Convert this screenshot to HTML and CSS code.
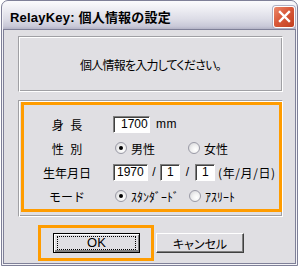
FILE: index.html
```html
<!DOCTYPE html>
<html lang="ja">
<head>
    <meta charset="UTF-8">
    <title>RelayKey</title>
    <link rel="stylesheet" href="styles.css">
</head>
<body>
    <div class="window">
        <div class="titlebar">
            <span class="title">RelayKey: 個人情報の設定</span>
            <span class="close">
                <svg width="13" height="13" viewBox="0 0 13 13">
                    <path d="M2 2 L11 11 M11 2 L2 11" stroke="#fff" stroke-width="2.4" stroke-linecap="square"/>
                </svg>
            </span>
        </div>

        <div class="client">
            <!-- 안내 메시지 -->
            <div class="panel message">個人情報を入力してください。</div>

            <!-- 입력 그룹 -->
            <div class="panel group">
                <div class="highlight form">
                    <div class="label">身&nbsp;&nbsp;長</div>
                    <div class="controls">
                        <input type="text" class="box w-height" value="1700">
                        <span class="unit">mm</span>
                    </div>

                    <div class="label">性&nbsp;&nbsp;別</div>
                    <div class="controls">
                        <label class="option w-sex"><input type="radio" name="sex" checked><span>男性</span></label>
                        <label class="option"><input type="radio" name="sex"><span>女性</span></label>
                    </div>

                    <div class="label">生年月日</div>
                    <div class="controls">
                        <input type="text" class="box w-year" value="1970">
                        <span class="slash">/</span>
                        <input type="text" class="box w-day" value="1">
                        <span class="slash wide">/</span>
                        <input type="text" class="box w-day" value="1">
                        <span class="hint">(年/月/日)</span>
                    </div>

                    <div class="label">モード</div>
                    <div class="controls">
                        <label class="option w-mode"><input type="radio" name="mode" checked><span class="half">ｽﾀﾝﾀﾞｰﾄﾞ</span></label>
                        <label class="option"><input type="radio" name="mode"><span class="half">ｱｽﾘｰﾄ</span></label>
                    </div>
                </div>
            </div>

            <div class="buttons">
                <div class="highlight ok-wrap">
                    <button class="btn default"><span class="focus">OK</span></button>
                </div>
                <button class="btn cancel">キャンセル</button>
            </div>
        </div>
    </div>
</body>
</html>
```

FILE: styles.css
```css
body {
    margin: 0;
    background: #ffffff;
    font-family: "Liberation Sans", "Noto Sans CJK JP", sans-serif;
    font-size: 12px;
    color: #000;
}

/* 창 테두리 */
.window {
    margin-left: 1px;
    width: 297px;
    height: 266px;
    box-sizing: border-box;
    border: 1px solid #7f8098;
    border-radius: 7px 7px 0 0;
    background: #f3f3f7;
    padding: 0 1px 1px 1px;
    display: flex;
    flex-direction: column;
    overflow: hidden;
}

.titlebar {
    height: 28px;
    flex: none;
    display: flex;
    align-items: center;
    justify-content: space-between;
    padding: 0 1px 0 7px;
    background: linear-gradient(#fbfbfd 0%, #ebebf1 35%, #dcdce6 65%, #c9c9d8 90%, #b4b4c6 100%);
    border-radius: 6px 6px 0 0;
}

.title {
    font-weight: bold;
    font-size: 13px;
    letter-spacing: 0.2px;
    color: #000;
    padding-top: 2px;
}

.close {
    width: 20px;
    height: 20px;
    margin-top: 3px;
    border: 1px solid #fff;
    border-radius: 3px;
    background: linear-gradient(135deg, #ec8a6c 0%, #d9593a 45%, #c13f1f 100%);
    box-shadow: 0 0 0 1px #b0b0c4;
    display: flex;
    align-items: center;
    justify-content: center;
}

/* 클라이언트 영역 */
.client {
    flex: 1;
    border: 1px solid #7f8098;
    background: #e0dfe3;
    padding: 6px 12px 0 14px;
}

/* 에칭 테두리 패널 */
.panel {
    border: 1px solid;
    border-color: #a0a0a4 #ffffff #ffffff #a0a0a4;
    box-shadow: inset 1px 1px 0 #ffffff, inset -1px -1px 0 #a0a0a4;
}

.message {
    display: flex;
    align-items: center;
    justify-content: center;
    padding-top: 2px;
    height: 52px;
    line-height: 16px;
    font-family: "Noto Sans CJK JP", sans-serif;
    font-feature-settings: "palt";
    letter-spacing: -0.8px;
}

.group {
    margin-top: 8px;
    padding: 1px 0 4px 2px;
}

.highlight {
    border: 3px solid #ff9c00;
}

.form {
    display: grid;
    grid-template-columns: 86px auto;
    grid-auto-rows: 24px;
    column-gap: 3px;
    align-items: center;
    padding: 7px 0 1px 0;
}

.label {
    text-align: center;
    font-family: "Liberation Sans", "Noto Sans CJK JP", sans-serif;
}

.controls {
    display: flex;
    align-items: center;
    white-space: nowrap;
}

/* 텍스트 박스 */
.box {
    height: 17px;
    box-sizing: border-box;
    margin: 0;
    padding: 0 0 0 3px;
    border: 1px solid;
    border-color: #808080 #ffffff #ffffff #808080;
    box-shadow: inset 1px 1px 0 #404040;
    background: #fff;
    font-family: "Liberation Sans", sans-serif;
    font-size: 12px;
    color: #000;
    outline: none;
}

.w-height { width: 37px; padding-left: 7px; }
.w-year { width: 35px; }
.w-day { width: 20px; padding-left: 6px; }

.unit {
    margin-left: 6px;
    letter-spacing: 0.5px;
}

.slash {
    width: 12px;
    text-align: center;
}

.slash.wide {
    width: 15px;
}

.hint {
    margin-left: 3px;
    font-family: "Noto Sans CJK JP", sans-serif;
    font-feature-settings: "palt";
    letter-spacing: 0.6px;
}

/* 라디오 버튼 */
.option {
    display: flex;
    align-items: center;
    font-family: "Noto Sans CJK JP", sans-serif;
}

.w-sex { width: 73px; }
.w-mode { width: 74px; }

.half {
    font-size: 12px;
}

.option input {
    appearance: none;
    -webkit-appearance: none;
    width: 12px;
    height: 12px;
    margin: 0 4px 0 2px;
    border-radius: 50%;
    border: 1px solid #9a9aa6;
    background: radial-gradient(circle at 65% 65%, #ffffff 0%, #f2f2f2 40%, #d0d0d4 100%);
    position: relative;
    flex: none;
}

.option input:checked::after {
    content: "";
    position: absolute;
    left: 3px;
    top: 3px;
    width: 4px;
    height: 4px;
    border-radius: 50%;
    background: #000;
}

/* 하단 버튼 */
.buttons {
    display: flex;
    align-items: center;
    margin-top: 8px;
    margin-left: 20px;
}

.ok-wrap {
    padding: 5px 11px 5px 12px;
}

.btn {
    height: 20px;
    margin: 0;
    padding: 0;
    background: #e0dfe3;
    font-family: "Liberation Sans", "Noto Sans CJK JP", sans-serif;
    font-size: 12px;
    color: #000;
    border: 1px solid;
    border-color: #ffffff #404040 #404040 #ffffff;
    box-shadow: inset -1px -1px 0 #808080;
}

.default {
    width: 87px;
    border: 1px solid #000;
    box-shadow: inset 1px 1px 0 #ffffff, inset -1px -2px 0 #808080;
    display: flex;
    align-items: center;
    justify-content: center;
}

.focus {
    display: block;
    width: 77px;
    height: 12px;
    line-height: 12px;
    border: 1px dotted #000;
    font-size: 13px;
}

.cancel {
    width: 88px;
    margin-left: 2px;
    font-family: "Noto Sans CJK JP", sans-serif;
    font-feature-settings: "palt";
}
```
